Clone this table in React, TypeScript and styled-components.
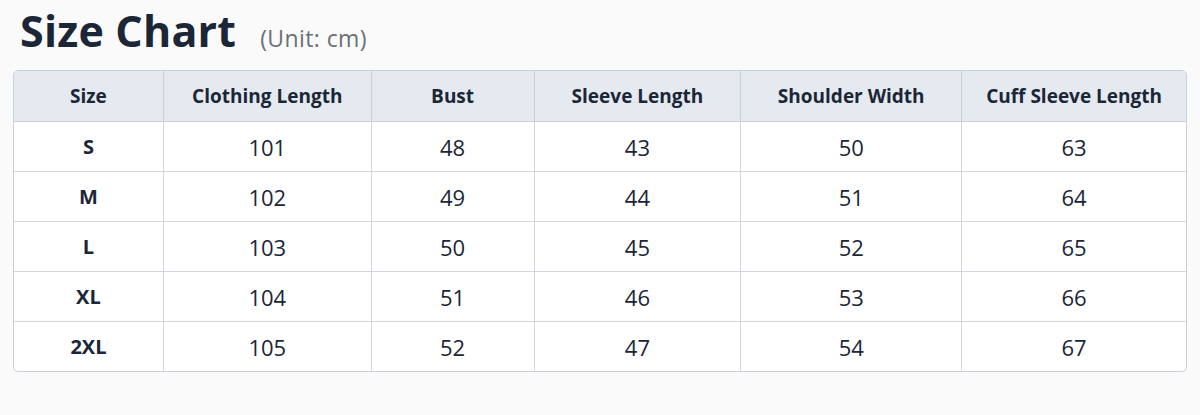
import React from "react";
import styled, { createGlobalStyle } from "styled-components";

const GlobalStyle = createGlobalStyle`
    html, body {
        margin: 0;
        padding: 0;
        background: #fafafa;
    }
    body {
        font-family: "Open Sans", "Noto Sans", sans-serif;
        color: #1b2637;
    }
`;

const Page = styled.div`
    width: 1200px;
    height: 415px;
    padding: 2px 13px 0 13px;
    box-sizing: border-box;
`;

const TitleRow = styled.div`
    display: flex;
    align-items: baseline;
    gap: 24px;
    padding-left: 7px;
    height: 68px;
`;

const Title = styled.h1`
    margin: 0;
    font-size: 43px;
    font-weight: 700;
    letter-spacing: 0.2px;
    color: #1b2637;
    line-height: 58px;
`;

const Unit = styled.span`
    font-size: 23px;
    color: #6b6f76;
    letter-spacing: 0.4px;
`;

const Table = styled.table`
    border-collapse: separate;
    border-spacing: 0;
    border: 1px solid #c9cfd7;
    border-radius: 5px;
    overflow: hidden;
    background: #ffffff;
    table-layout: fixed;
`;

const HeadCell = styled.th<{ $w: number }>`
    width: ${(p) => p.$w}px;
    height: 50px;
    padding: 0;
    background: #e5eaf0;
    font-size: 19px;
    font-weight: 700;
    color: #1b2637;
    text-align: center;
    border-right: 1px solid #c9cfd7;
    border-bottom: 1px solid #c9cfd7;
    &:last-child {
        border-right: none;
    }
`;

const Cell = styled.td<{ $bold?: boolean; $last?: boolean }>`
    height: 49px;
    padding: 0;
    text-align: center;
    font-size: ${(p) => (p.$bold ? "20px" : "22px")};
    font-weight: ${(p) => (p.$bold ? 700 : 400)};
    color: #1b2637;
    border-right: 1px solid #d3d8de;
    border-bottom: ${(p) => (p.$last ? "none" : "1px solid #d3d8de")};
    &:last-child {
        border-right: none;
    }
`;

const columns = [
    { label: "Size", width: 149 },
    { label: "Clothing Length", width: 207 },
    { label: "Bust", width: 162 },
    { label: "Sleeve Length", width: 206 },
    { label: "Shoulder Width", width: 220 },
    { label: "Cuff Sleeve Length", width: 224 },
];

const rows = [
    ["S", 101, 48, 43, 50, 63],
    ["M", 102, 49, 44, 51, 64],
    ["L", 103, 50, 45, 52, 65],
    ["XL", 104, 51, 46, 53, 66],
    ["2XL", 105, 52, 47, 54, 67],
];

const App = () => {
    return (
        <>
            <GlobalStyle />
            <Page>
                <TitleRow>
                    <Title>Size Chart</Title>
                    <Unit>(Unit: cm)</Unit>
                </TitleRow>
                <Table>
                    <thead>
                        <tr>
                            {columns.map((c) => (
                                <HeadCell key={c.label} $w={c.width}>
                                    {c.label}
                                </HeadCell>
                            ))}
                        </tr>
                    </thead>
                    <tbody>
                        {rows.map((r, i) => (
                            <tr key={r[0]}>
                                {r.map((v, j) => (
                                    <Cell key={j} $bold={j === 0} $last={i === rows.length - 1}>
                                        {v}
                                    </Cell>
                                ))}
                            </tr>
                        ))}
                    </tbody>
                </Table>
            </Page>
        </>
    );
};

export default App;
